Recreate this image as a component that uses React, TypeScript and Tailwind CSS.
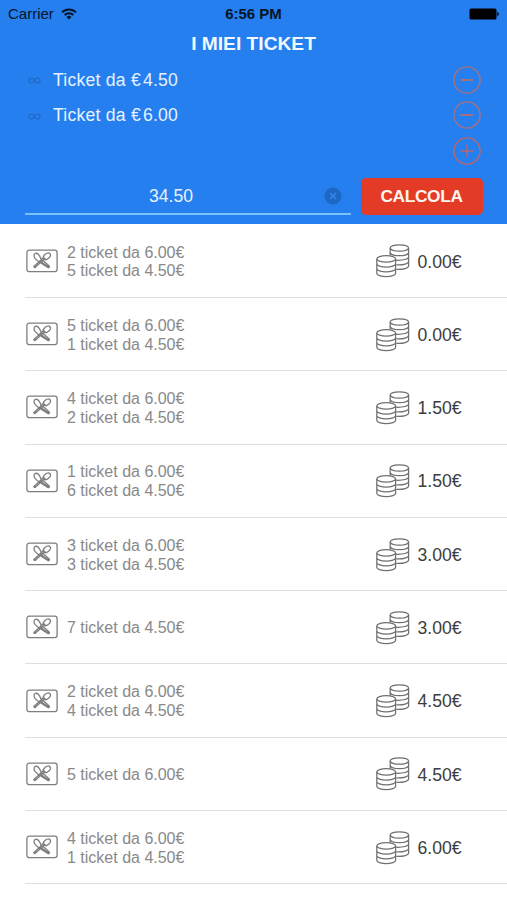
const rows: { lines: string[]; rest: string }[] = [
  { lines: ["2 ticket da 6.00€", "5 ticket da 4.50€"], rest: "0.00€" },
  { lines: ["5 ticket da 6.00€", "1 ticket da 4.50€"], rest: "0.00€" },
  { lines: ["4 ticket da 6.00€", "2 ticket da 4.50€"], rest: "1.50€" },
  { lines: ["1 ticket da 6.00€", "6 ticket da 4.50€"], rest: "1.50€" },
  { lines: ["3 ticket da 6.00€", "3 ticket da 4.50€"], rest: "3.00€" },
  { lines: ["7 ticket da 4.50€"], rest: "3.00€" },
  { lines: ["2 ticket da 6.00€", "4 ticket da 4.50€"], rest: "4.50€" },
  { lines: ["5 ticket da 6.00€"], rest: "4.50€" },
  { lines: ["4 ticket da 6.00€", "1 ticket da 4.50€"], rest: "6.00€" },
];

function WifiIcon() {
  return (
    <svg className="ml-[7px] h-3 w-4" viewBox="0 0 16 12" fill="none" stroke="#061428" strokeWidth="1.9">
      <path d="M1 4.4a10 10 0 0 1 14 0" />
      <path d="M3.6 7a6.3 6.3 0 0 1 8.8 0" />
      <path d="M8 11.5 5.5 9a3.6 3.6 0 0 1 5 0Z" fill="#061428" stroke="none" />
    </svg>
  );
}

function BatteryIcon() {
  return (
    <svg className="h-3 w-[31px]" viewBox="0 0 31 12" fill="#000">
      <rect x="1.5" y="0.5" width="27" height="11" rx="1.6" />
      <path d="M29.3 4v4c1-.3 1.500-1.100 1.500-2s-.5-1.700-1.500-2Z" />
    </svg>
  );
}

function RoundButton({ plus = false }: { plus?: boolean }) {
  return (
    <button className="size-7" aria-label={plus ? "Aggiungi" : "Rimuovi"}>
      <svg className="size-7" viewBox="0 0 28 28" fill="none" stroke={plus ? "#c0636a" : "#a8707f"} strokeWidth="1.4">
        <circle cx="14" cy="14" r="13.100" />
        <path d="M7.500 14h13" strokeWidth={plus ? 1.4 : 2} />
        {plus && <path d="M14 7.500v13" />}
      </svg>
    </button>
  );
}

function TicketKind({ price }: { price: string }) {
  return (
    <div className="flex h-[35.5px] items-center pr-[26px] pl-7">
      <svg className="mt-[2px] h-[7px] w-[13px]" viewBox="0 0 13 7" fill="none" stroke="#2567bd" strokeWidth="1.100">
        <path d="M6.500 3.500C5.400 1.700 4.600 1 3.400 1a2.500 2.500 0 0 0 0 5c1.200 0 2-.7 3.100-2.500S8.400 1 9.600 1a2.500 2.500 0 0 1 0 5c-1.200 0-2-.7-3.100-2.500Z" />
      </svg>
      <span className="ml-3 text-[17.600px] leading-5 tracking-[0.24px] text-[#e6f2ff]">Ticket da €</span>
      <span className="ml-[2px] flex-1 text-[17.600px] leading-5 tracking-[0.15px] text-[#e6f2ff]">{price}</span>
      <RoundButton />
    </div>
  );
}

function MealIcon() {
  return (
    <svg className="h-6 w-8" viewBox="0 0 32 24" fill="none" stroke="#7e7e7e" strokeWidth="1.3" strokeLinecap="round" strokeLinejoin="round">
      <rect x="0.900" y="1.200" width="30.200" height="21.400" rx="2.300" />
      <path d="M9.300 18.300 19 9.500M8.200 17.200l9.700-9" />
      <path d="M8.200 17.200c-.7.8.3 1.800 1.100 1.100" />
      <ellipse cx="20.900" cy="7.300" rx="4" ry="2.600" transform="rotate(-40 20.900 7.300)" />
      <path d="M9.400 4.400c-1.800.7-1.700 3.600-.2 5.200 1.400 1.500 3.200 2.600 4.700 4l2.200-2c-1.200-1.600-1.700-3.500-2.900-5.300C12.200 4.800 10.900 3.900 9.400 4.400Z" />
      <path d="m15.200 14.200 6.600 4.300c1 .6 2.200-.6 1.400-1.400L17.400 11.800M15.600 13l6.700 4.700" />
    </svg>
  );
}

function CoinsIcon() {
  return (
    <svg className="mt-px h-[34px] w-[34px]" viewBox="0 0 34 34" fill="none" stroke="#707070" strokeWidth="1.250">
      <path d="M14.200 11.700V4c0-1.800 4.100-3.200 9.200-3.200S32.600 2.200 32.600 4v18c0 2-4.900 3.700-12.300 3.300" />
      <path d="M14.200 4c0 1.800 4.100 3.200 9.200 3.200S32.600 5.800 32.600 4" />
      <path d="M14.200 8.500c0 1.800 4.100 3.200 9.200 3.200s9.200-1.400 9.200-3.200M19.800 16.200c7.400.4 12.800-1.200 12.800-3.200M20.300 20.800c7.400.4 12.300-1.300 12.300-3.300" />
      <ellipse cx="10.200" cy="14.900" rx="9.400" ry="3.200" fill="#fff" />
      <path d="M.8 14.900v14.300c0 2 4.200 3.500 9.400 3.500s9.400-1.500 9.400-3.500V14.900M.8 19.700c0 1.900 4.200 3.400 9.400 3.400s9.400-1.500 9.400-3.400M.8 24.500c0 1.900 4.200 3.400 9.400 3.400s9.400-1.500 9.400-3.400" />
    </svg>
  );
}

export default function App() {
  return (
    <div className="h-[900px] w-full overflow-hidden bg-white font-['Liberation_Sans',sans-serif]">
      <header className="flex h-[224px] flex-col bg-[#267fee]">
        <div className="grid h-[27px] grid-cols-3 items-center px-2 text-[15px] text-[#061428]">
          <div className="flex items-center pt-px">
            Carrier
            <WifiIcon />
          </div>
          <div className="pt-px text-center font-bold">6:56 PM</div>
          <div className="flex justify-end">
            <BatteryIcon />
          </div>
        </div>
        <h1 className="h-[35px] text-center text-[19.200px] leading-[34px] font-bold text-[#f2f8ff]">I MIEI TICKET</h1>
        <TicketKind price="4.50" />
        <TicketKind price="6.00" />
        <div className="flex h-[35px] items-center justify-end pr-[26px]">
          <RoundButton plus />
        </div>
        <div className="flex items-start pt-[10px] pr-[24.500px] pl-[25px]">
          <div className="flex h-[37px] flex-1 items-center border-b-2 border-[#7bc0fc] pr-[9px]">
            <span className="flex-1 pt-px pr-[7px] text-center text-[17.600px] text-[#e6f2ff]">34.50</span>
            <svg className="mt-px size-[18px]" viewBox="0 0 18 18" fill="none">
              <circle cx="9" cy="9" r="8.600" fill="#1d67c5" />
              <path d="m6 6 6 6m0-6-6 6" stroke="#388cf0" strokeWidth="1.300" />
            </svg>
          </div>
          <button className="ml-[9.500px] h-[37px] w-[122px] rounded-[5px] bg-[#e33b26] text-[17.300px] font-bold tracking-[-0.35px] text-[#fff5f0]">CALCOLA</button>
        </div>
      </header>
      <main className="pt-[0.6px]">
        {rows.map((row, i) => (
          <div key={i} className="ml-[25px] flex h-[73.320px] items-center border-b-[1.500px] border-[#dedede] pl-[1px]">
            <MealIcon />
            <div className="ml-[9px] flex-1 pt-[3px] text-[16px] leading-[18.700px] text-[#898989]">
              {row.lines.map((line) => (
                <div key={line}>{line}</div>
              ))}
            </div>
            <CoinsIcon />
            <div className="ml-[7.500px] w-[89.500px] pt-[2px] text-[17.600px] text-[#3d3d3d]">{row.rest}</div>
          </div>
        ))}
      </main>
    </div>
  );
}
